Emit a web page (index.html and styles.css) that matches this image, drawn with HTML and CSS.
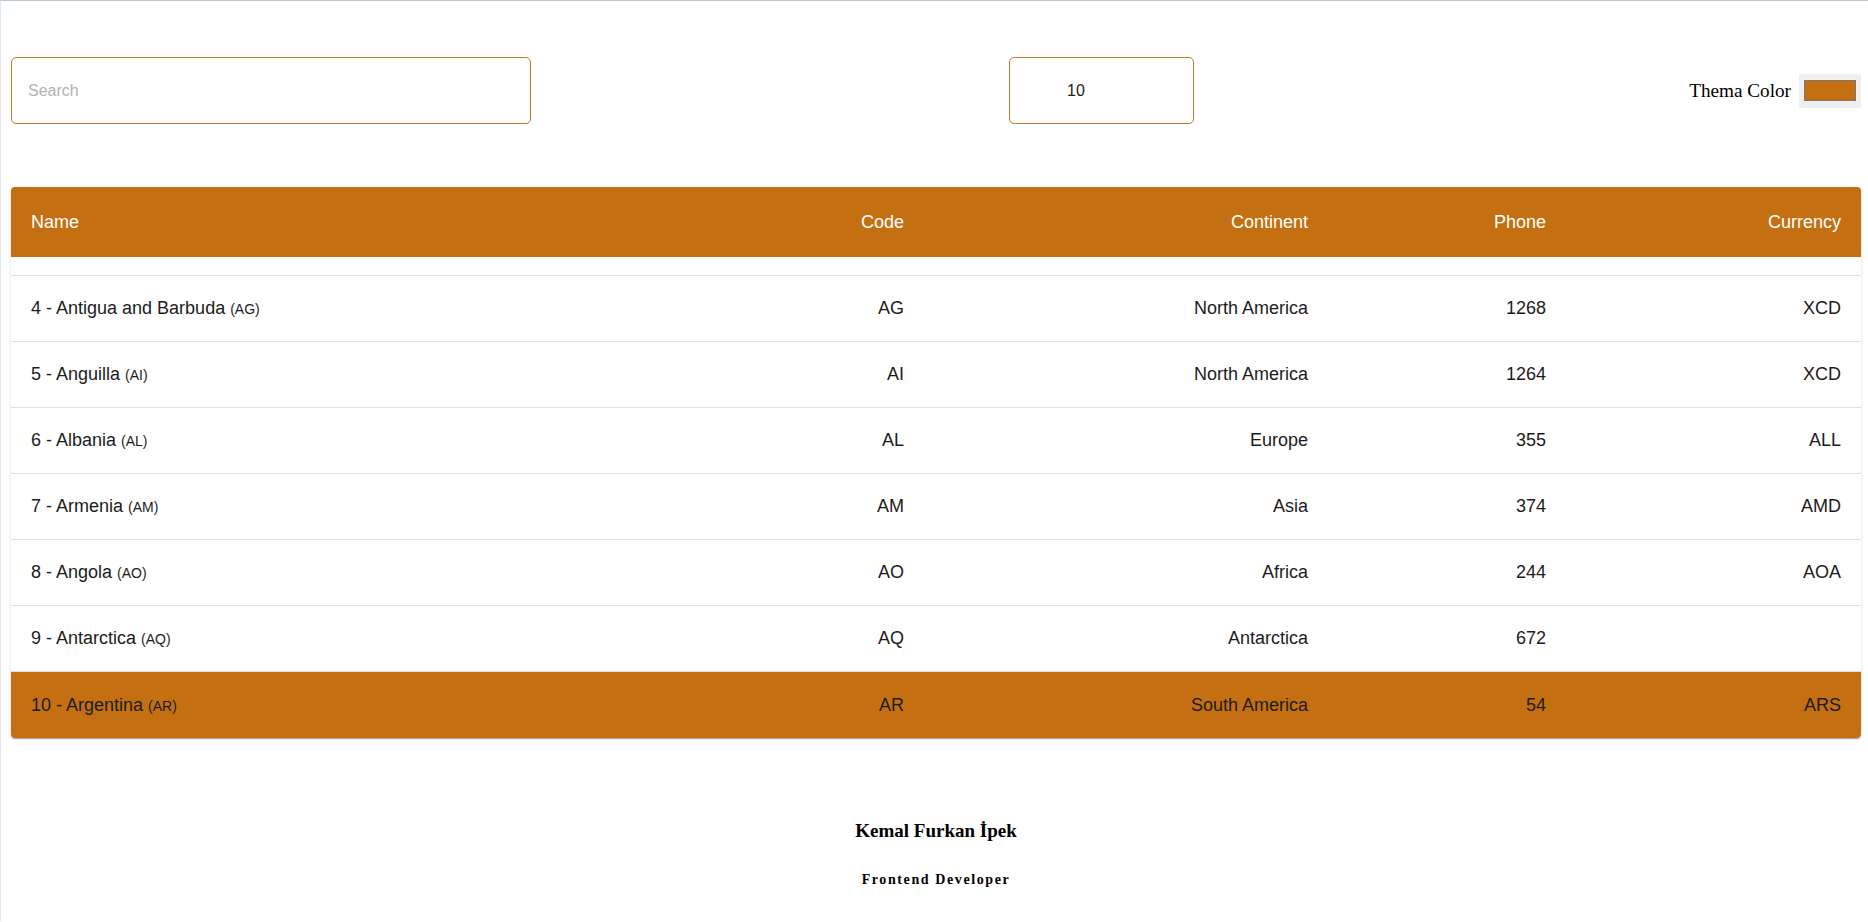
FILE: index.html
```html
<!DOCTYPE html>
<html lang="en">
<head>
<meta charset="utf-8">
<title>Countries</title>
<link rel="stylesheet" href="styles.css">
</head>
<body>
<div class="page">
  <div class="toolbar">
    <input class="search" type="text" placeholder="Search">
    <input class="count" type="text" value="10">
    <div class="theme">
      <span class="theme-label">Thema Color</span>
      <span class="swatch-box"><span class="swatch"></span></span>
    </div>
  </div>

  <div class="card">
    <div class="row head">
      <div class="cell">Name</div>
      <div class="cell num">Code</div>
      <div class="cell num">Continent</div>
      <div class="cell num">Phone</div>
      <div class="cell num">Currency</div>
    </div>
    <div class="spacer"></div>
    <div class="row">
      <div class="cell">4 - Antigua and Barbuda <small>(AG)</small></div>
      <div class="cell num">AG</div>
      <div class="cell num">North America</div>
      <div class="cell num">1268</div>
      <div class="cell num">XCD</div>
    </div>
    <div class="row">
      <div class="cell">5 - Anguilla <small>(AI)</small></div>
      <div class="cell num">AI</div>
      <div class="cell num">North America</div>
      <div class="cell num">1264</div>
      <div class="cell num">XCD</div>
    </div>
    <div class="row">
      <div class="cell">6 - Albania <small>(AL)</small></div>
      <div class="cell num">AL</div>
      <div class="cell num">Europe</div>
      <div class="cell num">355</div>
      <div class="cell num">ALL</div>
    </div>
    <div class="row">
      <div class="cell">7 - Armenia <small>(AM)</small></div>
      <div class="cell num">AM</div>
      <div class="cell num">Asia</div>
      <div class="cell num">374</div>
      <div class="cell num">AMD</div>
    </div>
    <div class="row">
      <div class="cell">8 - Angola <small>(AO)</small></div>
      <div class="cell num">AO</div>
      <div class="cell num">Africa</div>
      <div class="cell num">244</div>
      <div class="cell num">AOA</div>
    </div>
    <div class="row">
      <div class="cell">9 - Antarctica <small>(AQ)</small></div>
      <div class="cell num">AQ</div>
      <div class="cell num">Antarctica</div>
      <div class="cell num">672</div>
      <div class="cell num"></div>
    </div>
    <div class="row selected">
      <div class="cell">10 - Argentina <small>(AR)</small></div>
      <div class="cell num">AR</div>
      <div class="cell num">South America</div>
      <div class="cell num">54</div>
      <div class="cell num">ARS</div>
    </div>
  </div>

  <footer class="footer">
    <div class="author">Kemal Furkan İpek</div>
    <div class="role">Frontend Developer</div>
  </footer>
</div>
</body>
</html>
```

FILE: styles.css
```css
html, body {
  margin: 0;
  padding: 0;
  background: #fff;
}

body {
  border-top: 1px solid #b6c6d2;
  border-left: 1px solid #dde7ef;
  min-height: 921px;
  box-sizing: border-box;
  font-family: "Liberation Serif", "Times New Roman", serif;
}

.page {
  padding: 56px 7px 0 10px;
}

.toolbar {
  display: flex;
  align-items: center;
  height: 67px;
}

.search,
.count {
  box-sizing: border-box;
  height: 67px;
  border: 1px solid #c47a26;
  border-radius: 5px;
  background: #fff;
  font-family: "Liberation Sans", Arial, sans-serif;
  font-size: 16px;
  color: #222;
  outline: none;
  margin: 0;
}

.search {
  width: 520px;
  padding: 0 16px;
}

.search::placeholder {
  color: #b3b3b3;
}

.count {
  width: 185px;
  margin-left: 478px;
  padding: 0 0 0 57px;
}

.theme {
  margin-left: auto;
  display: flex;
  align-items: center;
  gap: 8px;
}

.theme-label {
  font-family: "Liberation Serif", "Times New Roman", serif;
  font-size: 19.2px;
  color: #000;
}

.swatch-box {
  display: block;
  background: #efefef;
  padding: 6px 5px 7px 5px;
}

.swatch {
  display: block;
  box-sizing: border-box;
  width: 52px;
  height: 21px;
  border: 1px solid #777;
  background: #c47012;
}

.card {
  margin-top: 63px;
  background: #fff;
  border-radius: 4px;
  overflow: hidden;
  box-shadow: 0 2px 1px -1px rgba(0, 0, 0, 0.2), 0 1px 1px 0 rgba(0, 0, 0, 0.14), 0 1px 3px 0 rgba(0, 0, 0, 0.12);
  font-family: "Liberation Sans", Arial, sans-serif;
  font-size: 18px;
  color: #1c1c1c;
}

.row {
  display: grid;
  grid-template-columns: 600px 313px 404px 238px 295px;
  align-items: center;
  height: 66px;
  box-sizing: border-box;
  border-bottom: 1px solid #e0e0e0;
}

.row.head {
  height: 70px;
  border-bottom: none;
  background: #c47012;
  color: #fff;
}

.row.selected {
  background: #c47012;
  border-bottom: none;
}

.spacer {
  height: 19px;
  box-sizing: border-box;
  border-bottom: 1px solid #e0e0e0;
}

.cell {
  padding: 0 20px;
  white-space: nowrap;
}

.cell.num {
  text-align: right;
}

.cell small {
  font-size: 14px;
}

.footer {
  display: flex;
  flex-direction: column;
  align-items: center;
  padding-top: 83px;
  color: #000;
}

.author {
  font-size: 19px;
  font-weight: bold;
  line-height: 20px;
}

.role {
  margin-top: 31px;
  font-size: 14px;
  font-weight: bold;
  line-height: 16px;
  letter-spacing: 1.6px;
}
```
